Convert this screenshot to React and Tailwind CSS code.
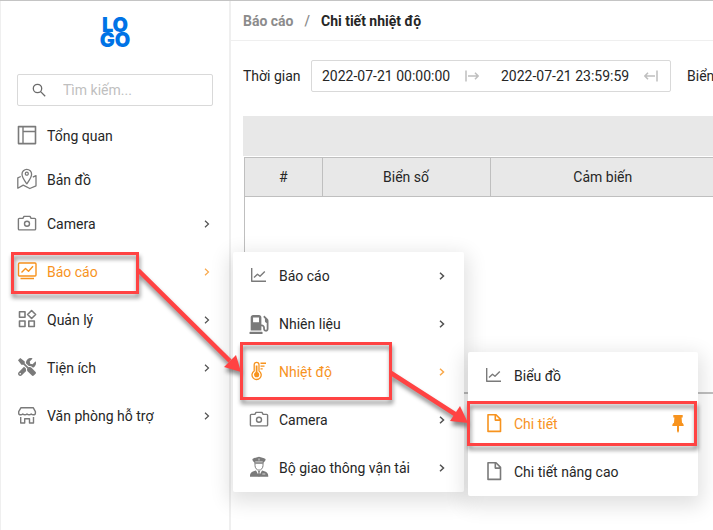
import React from "react";
import { FaTools, FaGasPump } from "react-icons/fa";

function Svg({ children }) {
  return (
    <svg
      viewBox="0 0 20 20"
      className="h-5 w-5 shrink-0 overflow-visible"
      fill="none"
      stroke="currentColor"
      strokeWidth="1.4"
      strokeLinejoin="round"
      aria-hidden="true"
    >
      {children}
    </svg>
  );
}

const LayoutIcon = () => (
  <Svg>
    <rect x="1.5" y="0.6" width="17" height="17" strokeWidth="1.6" />
    <path d="M6 .6v17M6 5.500h12.500" />
  </Svg>
);

const MapIcon = () => (
  <Svg>
    <g strokeWidth="1.3">
      <path d="M9.800 13.800C7.500 10.500 5 7.200 5 4.200a4.800 4.800 0 0 1 9.600 0c0 3-2.500 6.300-4.800 9.600z" />
      <circle cx="9.800" cy="3.700" r="1.500" />
      <path d="M3.800 6.500.8 7.800v10.400l5.400-3.100 6.600 3.400 6.200-2.700V5.600l-3.200 1.600" />
    </g>
  </Svg>
);

const CameraIcon = () => (
  <Svg>
    <path d="M2.300 4.400h3.600L7 2.400h6l1.100 2h3.600a.9.9 0 0 1 .9.900v9.700a.9.9 0 0 1-.9.900H2.300a.9.9 0 0 1-.9-.9V5.300a.9.9 0 0 1 .9-.9z" />
    <circle cx="10" cy="9.800" r="2.500" />
  </Svg>
);

const ScreenIcon = () => (
  <Svg>
    <rect x="1.500" y="1" width="17.500" height="13" rx="1" />
    <path d="M3.500 16.500h13.500M4.500 10.500l4-4 3 2.800 4.500-5" />
  </Svg>
);

const CategoryIcon = () => (
  <Svg>
    <g strokeWidth="1.6">
      <rect x="2.500" y="1.700" width="5.500" height="5.500" />
      <rect x="2.500" y="11" width="5.500" height="5.500" />
      <rect x="11.800" y="11" width="5.500" height="5.500" />
      <path d="M14.600.5l4 4-4 4-4-4z" />
    </g>
  </Svg>
);

const ToolsIcon = () => (
  <span className="flex h-5 w-5 shrink-0 justify-center">
    <FaTools className="h-[18px] w-[18px]" />
  </span>
);

const ShopIcon = () => (
  <Svg>
    <path d="M4 1.700h12.200l2.200 4v1.200c0 1-1 1.900-2.100 1.900-1.200 0-2.100-.9-2.100-.9s-.9.900-2.100.9-2.100-.9-2.100-.9-.9.900-2.100.9-2.100-.9-2.100-.9-.9.900-2.100.9S1.700 7.900 1.700 6.900V5.700z" />
    <path d="M3.700 11v6h4v-4.200h4.800V17h4v-6" />
  </Svg>
);

const ChartIcon = () => (
  <Svg>
    <path d="M2.700 2v13.300H17M5 11.500l3.500-3.300 2.500 2 4.800-4.700" />
  </Svg>
);

const FuelIcon = () => (
  <span className="h-5 w-5 shrink-0">
    <FaGasPump className="h-[19px] w-5" />
  </span>
);

const ThermometerIcon = () => (
  <Svg>
    <path d="M5.200 9V2.700a2.400 2.400 0 0 1 4.800 0V9a4.600 4.600 0 1 1-4.800 0z" strokeWidth="1.300" />
    <circle cx="7.600" cy="12.700" r="2.600" fill="currentColor" stroke="none" />
    <path d="M7.600 3.500v9" strokeWidth="1.800" />
    <path d="M11.500 1.300H17M11.500 4.100h4M11.500 6.900h2.200" />
  </Svg>
);

const OfficerIcon = () => (
  <Svg>
    <g fill="currentColor" stroke="none">
      <path d="M10-1.300c2.300.8 4.700 1 6.500 2.300.4 1.200-.6 2.500-1.800 3.200v1.600H5.300V4.200C4.100 3.500 3.100 2.200 3.500 1 5.300-.3 7.700-.5 10-1.300z" />
      <path d="M1 18.700c0-3.700 1-5 6-6.200l3 5.500 3-5.500c5 1.200 6.300 2.500 6.300 6.200z" />
      <path d="M9 13h2l-.4 1.500.6 3.200-1.200 1-1.200-1 .6-3.200z" />
    </g>
    <path d="M6 5.800v1.700c0 2.500 1.800 4.700 4 4.700s4-2.200 4-4.700V5.800" strokeWidth="1" />
    <path d="M6.300 3.900h7.400M10 .5v2M13.300 16h3" stroke="white" strokeWidth=".7" />
  </Svg>
);

const FileIcon = () => (
  <Svg>
    <path d="M4 .8h8l4.500 4.600v12H4zM11.300.8v5.300h5.200" strokeWidth="1.600" />
  </Svg>
);

const PinIcon = () => (
  <svg viewBox="0 0 12 18" className="ml-auto h-[18px] w-3 shrink-0" fill="currentColor" aria-hidden="true">
    <path d="M1.300 0h9.400v2.500H9.600L10 7.800c1.200.6 1.700 1.600 1.700 3.200H7v5l-1 2-1-2v-5H.3c0-1.600.5-2.600 1.700-3.200l.4-5.300H1.300z" />
  </svg>
);

function Chevron({ bold }) {
  return (
    <svg viewBox="0 0 8 10" className="ml-auto h-[10px] w-2 shrink-0 opacity-80" fill="none" stroke="currentColor" strokeWidth={bold ? 1.5 : 1.2} aria-hidden="true">
      <path d="M2 1.700L5.500 5 2 8.300" />
    </svg>
  );
}

function PopupRow({ icon: Icon, label, arrow, pinned, active }) {
  return (
    <li>
      <button
        type="button"
        className={`flex h-12 w-full items-center gap-[10px] pl-4 text-left ${pinned ? "pr-[14px]" : "pr-[18px]"} ${active ? "text-[#f7931e]" : "text-[#262626]"}`}
      >
        <span className={active ? "" : "text-[#7a7a7a]"}>
          <Icon />
        </span>
        <span>{label}</span>
        {arrow && <Chevron bold />}
        {pinned && <PinIcon />}
      </button>
    </li>
  );
}

function DetailPopup() {
  return (
    <ul className="absolute top-0 left-[235px] w-[230px] rounded-xs bg-white shadow-[0_6px_20px_4px_rgba(0,0,0,0.12)]">
      <PopupRow icon={ChartIcon} label="Biểu đồ" />
      <PopupRow icon={FileIcon} label="Chi tiết" active pinned />
      <PopupRow icon={FileIcon} label="Chi tiết nâng cao" />
    </ul>
  );
}

function ReportPopup() {
  return (
    <div className="absolute top-0 left-[232px] w-[231px] rounded-xs bg-white shadow-[0_6px_20px_4px_rgba(0,0,0,0.12)]">
      <ul>
        <PopupRow icon={ChartIcon} label="Báo cáo" arrow />
        <PopupRow icon={FuelIcon} label="Nhiên liệu" arrow />
        <PopupRow icon={ThermometerIcon} label="Nhiệt độ" arrow active />
        <PopupRow icon={CameraIcon} label="Camera" arrow />
        <PopupRow icon={OfficerIcon} label="Bộ giao thông vận tải" arrow />
      </ul>
      <div className="absolute top-[100px] left-0">
        <DetailPopup />
      </div>
    </div>
  );
}

const menu = [
  { label: "Tổng quan", icon: LayoutIcon },
  { label: "Bản đồ", icon: MapIcon },
  { label: "Camera", icon: CameraIcon, arrow: true },
  { label: "Báo cáo", icon: ScreenIcon, arrow: true, active: true },
  { label: "Quản lý", icon: CategoryIcon, arrow: true },
  { label: "Tiện ích", icon: ToolsIcon, arrow: true },
  { label: "Văn phòng hỗ trợ", icon: ShopIcon, arrow: true },
];

function Sidebar() {
  return (
    <aside className="relative z-10 w-[231px] shrink-0 border-r-2 border-l border-[#efefef]">
      <div className="flex h-[73px] flex-col items-center pt-[17px] font-['Inter',sans-serif] text-[20px] leading-[15px] font-black text-[#0073e6]">
        <span>LO</span>
        <span>GO</span>
      </div>
      <label className="mx-4 flex h-8 items-center rounded-xs border border-[#d9d9d9] pl-[14px]">
        <svg viewBox="0 0 14 14" className="h-[14px] w-[14px] shrink-0" fill="none" stroke="#6b6b6b" strokeWidth="1.300" aria-hidden="true">
          <circle cx="5.500" cy="5.500" r="4.200" />
          <path d="M8.600 8.600l4.600 4.600" />
        </svg>
        <input type="text" aria-label="Tìm kiếm" placeholder="Tìm kiếm..." className="ml-[17px] w-full min-w-0 outline-none placeholder:text-[#bfbfbf]" />
      </label>
      <nav className="pt-[10px]">
        <ul>
          {menu.map(({ label, icon: Icon, arrow, active }) => (
            <li key={label} className={`relative ${arrow ? "mb-2" : "mb-1"}`}>
              <button
                type="button"
                className={`flex h-10 w-full items-center gap-[10px] pr-[18px] pl-4 text-left ${active ? "text-[#f7931e]" : "text-[#262626]"}`}
              >
                <span className={active ? "" : "text-[#7a7a7a]"}>
                  <Icon />
                </span>
                <span>{label}</span>
                {arrow && <Chevron />}
              </button>
              {active && <ReportPopup />}
            </li>
          ))}
        </ul>
      </nav>
    </aside>
  );
}

function DateField({ value, label, end }) {
  return (
    <label className="flex h-[30px] flex-1 items-center justify-between pr-3 pl-[10px]">
      <input type="text" aria-label={label} defaultValue={value} className="w-[136px] text-[#262626] outline-none" />
      <svg viewBox="0 0 14 12" className="h-3 w-[14px] shrink-0" fill="none" stroke="#bfbfbf" strokeWidth="1.500" aria-hidden="true">
        {end ? <path d="M13 .5v11M11 6H1M4 2.700L.9 6 4 9.300" /> : <path d="M1 .5v11M3 6h10M10 2.700L13.100 6 10 9.300" />}
      </svg>
    </label>
  );
}

function Content() {
  return (
    <main className="min-w-0 flex-1 overflow-hidden">
      <nav aria-label="Breadcrumb" className="flex h-10 items-center border-b border-[#efefef] pl-3 font-bold">
        <a href="#bao-cao" className="text-[#8c8c8c]">Báo cáo</a>
        <span className="px-[11px] font-medium text-[#8c8c8c]">/</span>
        <span className="text-[#262626]">Chi tiết nhiệt độ</span>
      </nav>
      <form className="flex items-center pt-[19px] pl-3 whitespace-nowrap">
        <span className="w-[68px] shrink-0">Thời gian</span>
        <div className="flex w-[360px] shrink-0 rounded-xs border border-[#d9d9d9]">
          <DateField label="Từ" value="2022-07-21 00:00:00" />
          <DateField label="Đến" value="2022-07-21 23:59:59" end />
        </div>
        <span className="ml-4">Biển số</span>
      </form>
      <div className="mt-6 ml-3 h-10 bg-[#e8e8e8]" />
      <div className="mt-px ml-[13px] h-[237px] border-b-2 border-l border-[#bfbfbf]">
        <table className="w-[471px] table-fixed border-collapse">
          <thead>
            <tr className="h-[39px] bg-[#e8e8e8]">
              <th className="w-[77px] border border-l-0 border-[#bfbfbf] font-normal">#</th>
              <th className="w-[168px] border border-[#bfbfbf] font-normal">Biển số</th>
              <th className="border border-[#bfbfbf] font-normal">Cảm biến</th>
            </tr>
          </thead>
        </table>
      </div>
    </main>
  );
}

function Callouts() {
  return (
    <svg
      className="pointer-events-none absolute -top-px left-0 z-20 h-[530px] w-[713px] drop-shadow-[1px_4px_2px_rgba(0,0,0,0.45)]"
      viewBox="0 0 713 530"
      fill="none"
      stroke="#ff4343"
      strokeWidth="3"
      aria-hidden="true"
    >
      <rect x="12.500" y="253.500" width="125" height="39" />
      <rect x="241.500" y="343.500" width="149" height="55" />
      <rect x="468.500" y="402.500" width="227" height="42" />
      <path d="M138 270l92 91M391 373l67 43" strokeWidth="4.500" />
      <path d="M241 372l-17-5 12-12zM468 423l-18-2 10-15z" fill="#ff4343" stroke="none" />
    </svg>
  );
}

export default function App() {
  return (
    <div className="relative flex min-h-screen flex-col overflow-hidden border-t border-[#c4c4c4] bg-white font-['Roboto',sans-serif] text-sm text-[#262626]">
      <div className="flex grow">
        <Sidebar />
        <Content />
      </div>
      <Callouts />
    </div>
  );
}
